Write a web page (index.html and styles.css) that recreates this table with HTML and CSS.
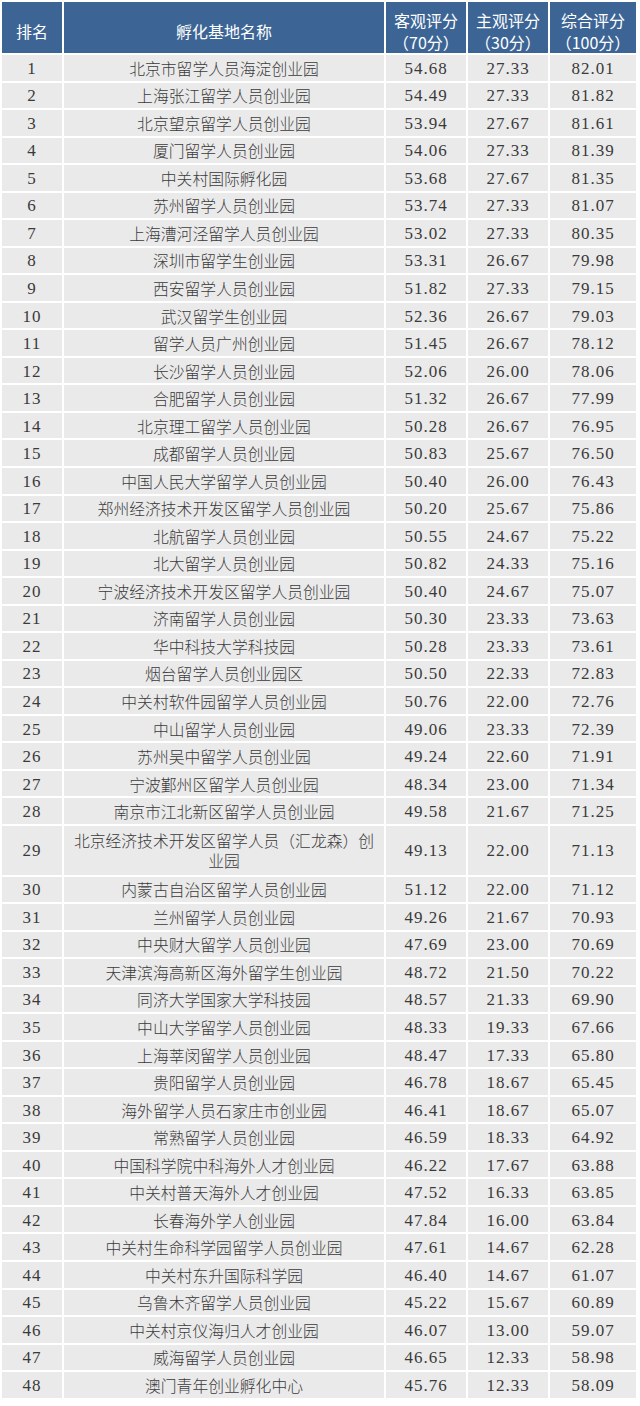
FILE: index.html
```html
<!DOCTYPE html>
<html lang="zh-CN">
<head>
<meta charset="utf-8">
<title>留学人员创业园排名</title>
<link rel="stylesheet" href="styles.css">
</head>
<body>
<table class="rank-table">
  <colgroup>
    <col class="c-rank">
    <col class="c-name">
    <col class="c-obj">
    <col class="c-sub">
    <col class="c-total">
  </colgroup>
  <thead>
    <tr class="head-row">
      <th>排名</th>
      <th>孵化基地名称</th>
      <th>客观评分<br>（70分）</th>
      <th>主观评分<br>（30分）</th>
      <th>综合评分<br>（100分）</th>
    </tr>
  </thead>
  <tbody>
    <tr><td class="num">1</td><td class="name">北京市留学人员海淀创业园</td><td class="num">54.68</td><td class="num">27.33</td><td class="num">82.01</td></tr>
    <tr><td class="num">2</td><td class="name">上海张江留学人员创业园</td><td class="num">54.49</td><td class="num">27.33</td><td class="num">81.82</td></tr>
    <tr><td class="num">3</td><td class="name">北京望京留学人员创业园</td><td class="num">53.94</td><td class="num">27.67</td><td class="num">81.61</td></tr>
    <tr><td class="num">4</td><td class="name">厦门留学人员创业园</td><td class="num">54.06</td><td class="num">27.33</td><td class="num">81.39</td></tr>
    <tr><td class="num">5</td><td class="name">中关村国际孵化园</td><td class="num">53.68</td><td class="num">27.67</td><td class="num">81.35</td></tr>
    <tr><td class="num">6</td><td class="name">苏州留学人员创业园</td><td class="num">53.74</td><td class="num">27.33</td><td class="num">81.07</td></tr>
    <tr><td class="num">7</td><td class="name">上海漕河泾留学人员创业园</td><td class="num">53.02</td><td class="num">27.33</td><td class="num">80.35</td></tr>
    <tr><td class="num">8</td><td class="name">深圳市留学生创业园</td><td class="num">53.31</td><td class="num">26.67</td><td class="num">79.98</td></tr>
    <tr><td class="num">9</td><td class="name">西安留学人员创业园</td><td class="num">51.82</td><td class="num">27.33</td><td class="num">79.15</td></tr>
    <tr><td class="num">10</td><td class="name">武汉留学生创业园</td><td class="num">52.36</td><td class="num">26.67</td><td class="num">79.03</td></tr>
    <tr><td class="num">11</td><td class="name">留学人员广州创业园</td><td class="num">51.45</td><td class="num">26.67</td><td class="num">78.12</td></tr>
    <tr><td class="num">12</td><td class="name">长沙留学人员创业园</td><td class="num">52.06</td><td class="num">26.00</td><td class="num">78.06</td></tr>
    <tr><td class="num">13</td><td class="name">合肥留学人员创业园</td><td class="num">51.32</td><td class="num">26.67</td><td class="num">77.99</td></tr>
    <tr><td class="num">14</td><td class="name">北京理工留学人员创业园</td><td class="num">50.28</td><td class="num">26.67</td><td class="num">76.95</td></tr>
    <tr><td class="num">15</td><td class="name">成都留学人员创业园</td><td class="num">50.83</td><td class="num">25.67</td><td class="num">76.50</td></tr>
    <tr><td class="num">16</td><td class="name">中国人民大学留学人员创业园</td><td class="num">50.40</td><td class="num">26.00</td><td class="num">76.43</td></tr>
    <tr><td class="num">17</td><td class="name">郑州经济技术开发区留学人员创业园</td><td class="num">50.20</td><td class="num">25.67</td><td class="num">75.86</td></tr>
    <tr><td class="num">18</td><td class="name">北航留学人员创业园</td><td class="num">50.55</td><td class="num">24.67</td><td class="num">75.22</td></tr>
    <tr><td class="num">19</td><td class="name">北大留学人员创业园</td><td class="num">50.82</td><td class="num">24.33</td><td class="num">75.16</td></tr>
    <tr><td class="num">20</td><td class="name">宁波经济技术开发区留学人员创业园</td><td class="num">50.40</td><td class="num">24.67</td><td class="num">75.07</td></tr>
    <tr><td class="num">21</td><td class="name">济南留学人员创业园</td><td class="num">50.30</td><td class="num">23.33</td><td class="num">73.63</td></tr>
    <tr><td class="num">22</td><td class="name">华中科技大学科技园</td><td class="num">50.28</td><td class="num">23.33</td><td class="num">73.61</td></tr>
    <tr><td class="num">23</td><td class="name">烟台留学人员创业园区</td><td class="num">50.50</td><td class="num">22.33</td><td class="num">72.83</td></tr>
    <tr><td class="num">24</td><td class="name">中关村软件园留学人员创业园</td><td class="num">50.76</td><td class="num">22.00</td><td class="num">72.76</td></tr>
    <tr><td class="num">25</td><td class="name">中山留学人员创业园</td><td class="num">49.06</td><td class="num">23.33</td><td class="num">72.39</td></tr>
    <tr><td class="num">26</td><td class="name">苏州吴中留学人员创业园</td><td class="num">49.24</td><td class="num">22.60</td><td class="num">71.91</td></tr>
    <tr><td class="num">27</td><td class="name">宁波鄞州区留学人员创业园</td><td class="num">48.34</td><td class="num">23.00</td><td class="num">71.34</td></tr>
    <tr><td class="num">28</td><td class="name">南京市江北新区留学人员创业园</td><td class="num">49.58</td><td class="num">21.67</td><td class="num">71.25</td></tr>
    <tr class="tall"><td class="num">29</td><td class="name">北京经济技术开发区留学人员（汇龙森）创业园</td><td class="num">49.13</td><td class="num">22.00</td><td class="num">71.13</td></tr>
    <tr><td class="num">30</td><td class="name">内蒙古自治区留学人员创业园</td><td class="num">51.12</td><td class="num">22.00</td><td class="num">71.12</td></tr>
    <tr><td class="num">31</td><td class="name">兰州留学人员创业园</td><td class="num">49.26</td><td class="num">21.67</td><td class="num">70.93</td></tr>
    <tr><td class="num">32</td><td class="name">中央财大留学人员创业园</td><td class="num">47.69</td><td class="num">23.00</td><td class="num">70.69</td></tr>
    <tr><td class="num">33</td><td class="name">天津滨海高新区海外留学生创业园</td><td class="num">48.72</td><td class="num">21.50</td><td class="num">70.22</td></tr>
    <tr><td class="num">34</td><td class="name">同济大学国家大学科技园</td><td class="num">48.57</td><td class="num">21.33</td><td class="num">69.90</td></tr>
    <tr><td class="num">35</td><td class="name">中山大学留学人员创业园</td><td class="num">48.33</td><td class="num">19.33</td><td class="num">67.66</td></tr>
    <tr><td class="num">36</td><td class="name">上海莘闵留学人员创业园</td><td class="num">48.47</td><td class="num">17.33</td><td class="num">65.80</td></tr>
    <tr><td class="num">37</td><td class="name">贵阳留学人员创业园</td><td class="num">46.78</td><td class="num">18.67</td><td class="num">65.45</td></tr>
    <tr><td class="num">38</td><td class="name">海外留学人员石家庄市创业园</td><td class="num">46.41</td><td class="num">18.67</td><td class="num">65.07</td></tr>
    <tr><td class="num">39</td><td class="name">常熟留学人员创业园</td><td class="num">46.59</td><td class="num">18.33</td><td class="num">64.92</td></tr>
    <tr><td class="num">40</td><td class="name">中国科学院中科海外人才创业园</td><td class="num">46.22</td><td class="num">17.67</td><td class="num">63.88</td></tr>
    <tr><td class="num">41</td><td class="name">中关村普天海外人才创业园</td><td class="num">47.52</td><td class="num">16.33</td><td class="num">63.85</td></tr>
    <tr><td class="num">42</td><td class="name">长春海外学人创业园</td><td class="num">47.84</td><td class="num">16.00</td><td class="num">63.84</td></tr>
    <tr><td class="num">43</td><td class="name">中关村生命科学园留学人员创业园</td><td class="num">47.61</td><td class="num">14.67</td><td class="num">62.28</td></tr>
    <tr><td class="num">44</td><td class="name">中关村东升国际科学园</td><td class="num">46.40</td><td class="num">14.67</td><td class="num">61.07</td></tr>
    <tr><td class="num">45</td><td class="name">乌鲁木齐留学人员创业园</td><td class="num">45.22</td><td class="num">15.67</td><td class="num">60.89</td></tr>
    <tr><td class="num">46</td><td class="name">中关村京仪海归人才创业园</td><td class="num">46.07</td><td class="num">13.00</td><td class="num">59.07</td></tr>
    <tr><td class="num">47</td><td class="name">威海留学人员创业园</td><td class="num">46.65</td><td class="num">12.33</td><td class="num">58.98</td></tr>
    <tr><td class="num">48</td><td class="name">澳门青年创业孵化中心</td><td class="num">45.76</td><td class="num">12.33</td><td class="num">58.09</td></tr>
  </tbody>
</table>
</body>
</html>
```

FILE: styles.css
```css
html, body {
  margin: 0;
  padding: 0;
  background: #ffffff;
}

.rank-table {
  width: 638px;
  table-layout: fixed;
  border-collapse: separate;
  border-spacing: 2px;
  margin: 0;
}

.c-rank { width: 60px; }
.c-name { width: 320px; }
.c-obj { width: 80px; }
.c-sub { width: 80px; }
.c-total { width: 86px; }

.head-row {
  height: 50.7px;
}

.head-row th {
  background: #3c6596;
  color: #ffffff;
  font-family: "Noto Sans CJK SC", "Noto Sans", sans-serif;
  font-weight: normal;
  font-size: 16px;
  line-height: 22px;
  padding: 7px 0 0;
  text-align: center;
  vertical-align: middle;
}

tbody tr {
  height: 25.54px;
}

tbody tr.tall {
  height: 48.7px;
}

tbody td {
  background: #eaeaea;
  color: #3a3a3a;
  text-align: center;
  vertical-align: middle;
  padding: 2px 0 0;
}

.num {
  font-family: "Liberation Serif", "DejaVu Serif", serif;
  font-size: 17px;
  letter-spacing: 1px;
  line-height: 20px;
}

.name {
  font-family: "Noto Sans CJK SC", "Noto Sans", sans-serif;
  font-size: 15.8px;
  font-weight: 300;
  line-height: 20px;
  padding-left: 6px;
  padding-right: 6px;
}
```
